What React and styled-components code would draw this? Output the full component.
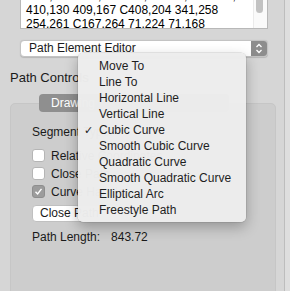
import React from 'react';
import styled, { createGlobalStyle } from 'styled-components';

const menuItems = [
    'Move To',
    'Line To',
    'Horizontal Line',
    'Vertical Line',
    'Cubic Curve',
    'Smooth Cubic Curve',
    'Quadratic Curve',
    'Smooth Quadratic Curve',
    'Elliptical Arc',
    'Freestyle Path',
];

function App() {
    return (
        <Window>
            <GlobalStyle />
            <Main>
                <TextArea>
                    <TextLines>
                        <div>M71,168 C71,112 167,72 254,75 C341,78</div>
                        <div>410,130 409,167 C408,204 341,258</div>
                        <div>254,261 C167,264 71,224 71,168</div>
                    </TextLines>
                    <Scroller>
                        <Thumb />
                    </Scroller>
                </TextArea>

                <Popup>
                    <PopupLabel>Path Element Editor</PopupLabel>
                    <Stepper>
                        <svg width="8" height="11" viewBox="0 0 8 11">
                            <path d="M1.5 4 L4 1.5 L6.5 4 M1.5 7 L4 9.5 L6.5 7" fill="none" stroke="#fff" strokeWidth="1.3" />
                        </svg>
                    </Stepper>
                </Popup>

                <Heading>Path Controls</Heading>

                <Group>
                    <Tabs>
                        <Tab>Drawing</Tab>
                    </Tabs>
                    <GroupBody>
                        <Label>Segment Type:</Label>
                        <Checks>
                            <CheckRow>
                                <Box />
                                Relative Coordinates
                            </CheckRow>
                            <CheckRow>
                                <Box />
                                Close Path
                            </CheckRow>
                            <CheckRow>
                                <Box checked>
                                    <svg width="9" height="9" viewBox="0 0 9 9">
                                        <path d="M1.5 4.8 L3.6 7 L7.5 1.8" fill="none" stroke="#fff" strokeWidth="1.4" />
                                    </svg>
                                </Box>
                                Curve Handles
                            </CheckRow>
                        </Checks>
                        <Button>Close Path</Button>
                        <Length>
                            Path Length:<Value>843.72</Value>
                        </Length>
                    </GroupBody>
                </Group>
            </Main>

            <Menu>
                {menuItems.map((item) => (
                    <MenuItem key={item}>
                        <Tick>{item === 'Cubic Curve' ? '✓' : ''}</Tick>
                        {item}
                    </MenuItem>
                ))}
            </Menu>
        </Window>
    );
}

const GlobalStyle = createGlobalStyle`
    body {
        margin: 0;
        font-family: "Liberation Sans", Arial, sans-serif;
        font-size: 12px;
        color: #1a1a1a;
    }
`;

const Window = styled.div`
    position: relative;
    width: 290px;
    height: 291px;
    overflow: hidden;
    background: #dedede;
    display: flex;
`;

const Main = styled.div`
    width: 285px;
    background: #d6d6d6;
    border-right: 1px solid #bdbdbd;
    padding: 0 8px 0 10px;
    box-sizing: border-box;
    display: flex;
    flex-direction: column;
`;

const TextArea = styled.div`
    margin: 0 8px 0 10px;
    height: 29px;
    background: #fff;
    border: 1px solid #b8b8b8;
    border-top: none;
    box-sizing: border-box;
    display: flex;
    overflow: hidden;
`;

const TextLines = styled.div`
    flex: 1;
    padding-left: 5px;
    margin-top: -11px;
    line-height: 14px;
    font-size: 12px;
    color: #000;
    white-space: nowrap;
    overflow: hidden;
`;

const Scroller = styled.div`
    width: 14px;
    border-left: 1px solid #ebebeb;
    background: #fafafa;
    padding-left: 2px;
    box-sizing: border-box;
`;

const Thumb = styled.div`
    width: 7px;
    height: 13px;
    background: #c2c2c2;
    border-radius: 0 0 4px 4px;
`;

const Popup = styled.div`
    margin: 11px 8px 0 10px;
    height: 17px;
    background: #fff;
    border: 1px solid #c3c3c3;
    border-radius: 4px;
    box-sizing: border-box;
    display: flex;
    align-items: center;
    overflow: hidden;
    box-shadow: 0 0.5px 1px rgba(0, 0, 0, 0.15);
`;

const PopupLabel = styled.div`
    flex: 1;
    padding-left: 8px;
    font-size: 12px;
    line-height: 15px;
`;

const Stepper = styled.div`
    width: 16px;
    height: 100%;
    background: #8d8d8d;
    display: flex;
    align-items: center;
    justify-content: center;
`;

const Heading = styled.div`
    margin-top: 13px;
    font-size: 13px;
    line-height: 16px;
`;

const Group = styled.div`
    margin-top: 8px;
    flex: 1;
    display: flex;
    flex-direction: column;
`;

const Tabs = styled.div`
    display: flex;
    padding-left: 29px;
    height: 18px;
    position: relative;
    z-index: 1;
`;

const Tab = styled.div`
    width: 190px;
    background: #8f8f8f;
    color: #fff;
    border-radius: 4px;
    padding-left: 12px;
    font-size: 12px;
    line-height: 18px;
    box-sizing: border-box;
`;

const GroupBody = styled.div`
    flex: 1;
    margin-top: -9px;
    margin-bottom: -6px;
    background: #cdcdcd;
    border: 1px solid #c6c6c6;
    border-radius: 5px;
    padding: 21px 0 0 21px;
`;

const Label = styled.div`
    line-height: 14px;
`;

const Checks = styled.div`
    margin-top: 10px;
    display: flex;
    flex-direction: column;
    gap: 5px;
`;

const CheckRow = styled.div`
    display: flex;
    align-items: center;
    gap: 6px;
    line-height: 12px;
`;

const Box = styled.div`
    width: 11px;
    height: 11px;
    border-radius: 3px;
    background: ${(p) => (p.checked ? '#9c9c9c' : '#fff')};
    border: 1px solid ${(p) => (p.checked ? '#8e8e8e' : '#b5b5b5')};
    display: flex;
    align-items: center;
    justify-content: center;
`;

const Button = styled.div`
    margin-top: 7px;
    width: 90px;
    height: 17px;
    background: #fff;
    border: 1px solid #c0c0c0;
    border-radius: 4px;
    box-sizing: border-box;
    padding-left: 7px;
    line-height: 15px;
`;

const Length = styled.div`
    margin-top: 8px;
    line-height: 14px;
`;

const Value = styled.span`
    margin-left: 11px;
`;

const Menu = styled.div`
    position: absolute;
    z-index: 10;
    left: 78px;
    top: 53px;
    width: 168px;
    padding: 5px 0 4px;
    background: rgba(237, 237, 237, 0.98);
    border-radius: 5px;
    box-shadow: 0 0 0 0.5px rgba(0, 0, 0, 0.15), 0 5px 14px rgba(0, 0, 0, 0.28);
`;

const MenuItem = styled.div`
    display: flex;
    align-items: center;
    height: 16px;
    font-size: 12px;
    color: #1e1e1e;
`;

const Tick = styled.span`
    width: 21px;
    text-align: center;
    font-family: "DejaVu Sans", sans-serif;
    font-size: 11px;
`;

export default App;
